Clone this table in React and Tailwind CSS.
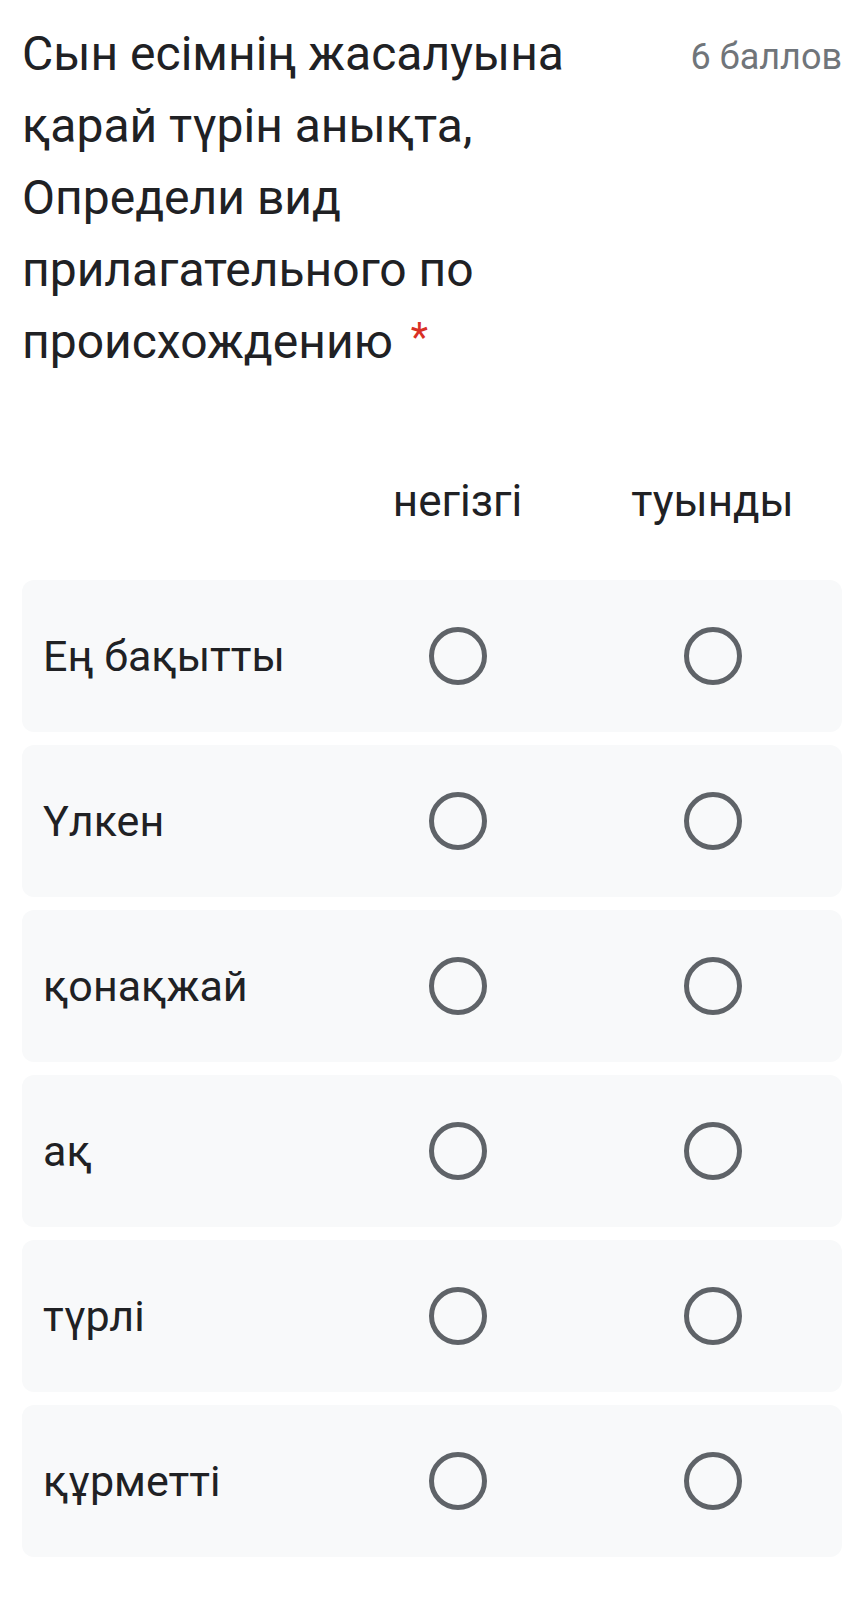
import React from 'react'

const rows = ['Ең бақытты', 'Үлкен', 'қонақжай', 'ақ', 'түрлі', 'құрметті']
const columns = ['негізгі', 'туынды']

const Radio = () => (
  <div className="h-[58px] w-[58px] rounded-full border-[5.5px] border-[#5f6368]" />
)

export default function App() {
  return (
    <div className="min-h-[1604px] bg-white px-[22px] pt-[18px] font-['Roboto',sans-serif] text-[#202124]">
      {/* Question title */}
      <div className="flex items-start justify-between gap-6">
        <h2 className="max-w-[600px] text-[48px] leading-[72px] font-normal">
          Сын есімнің жасалуына қарай түрін анықта, Определи вид прилагательного по происхождению
          <span className="ml-[18px] align-top text-[40px] leading-[64px] text-[#d93025]">*</span>
        </h2>
        <div className="shrink-0 pt-[3px] text-[36px] leading-[72px] text-[#70757a]">6 баллов</div>
      </div>

      {/* Grid header */}
      <div className="mt-[95px] grid grid-cols-[308px_255px_255px] text-[44px] leading-[56px]">
        <div />
        {columns.map((c) => (
          <div key={c} className="text-center">{c}</div>
        ))}
      </div>

      {/* Grid rows */}
      <div className="mt-[51px] flex flex-col gap-[13px]">
        {rows.map((r) => (
          <div
            key={r}
            className="grid h-[152px] grid-cols-[308px_255px_255px] items-center rounded-[12px] bg-[#f8f9fa]"
          >
            <div className="pl-[21px] text-[43px] leading-[56px]">{r}</div>
            {columns.map((c) => (
              <div key={c} className="flex justify-center">
                <Radio />
              </div>
            ))}
          </div>
        ))}
      </div>
    </div>
  )
}
